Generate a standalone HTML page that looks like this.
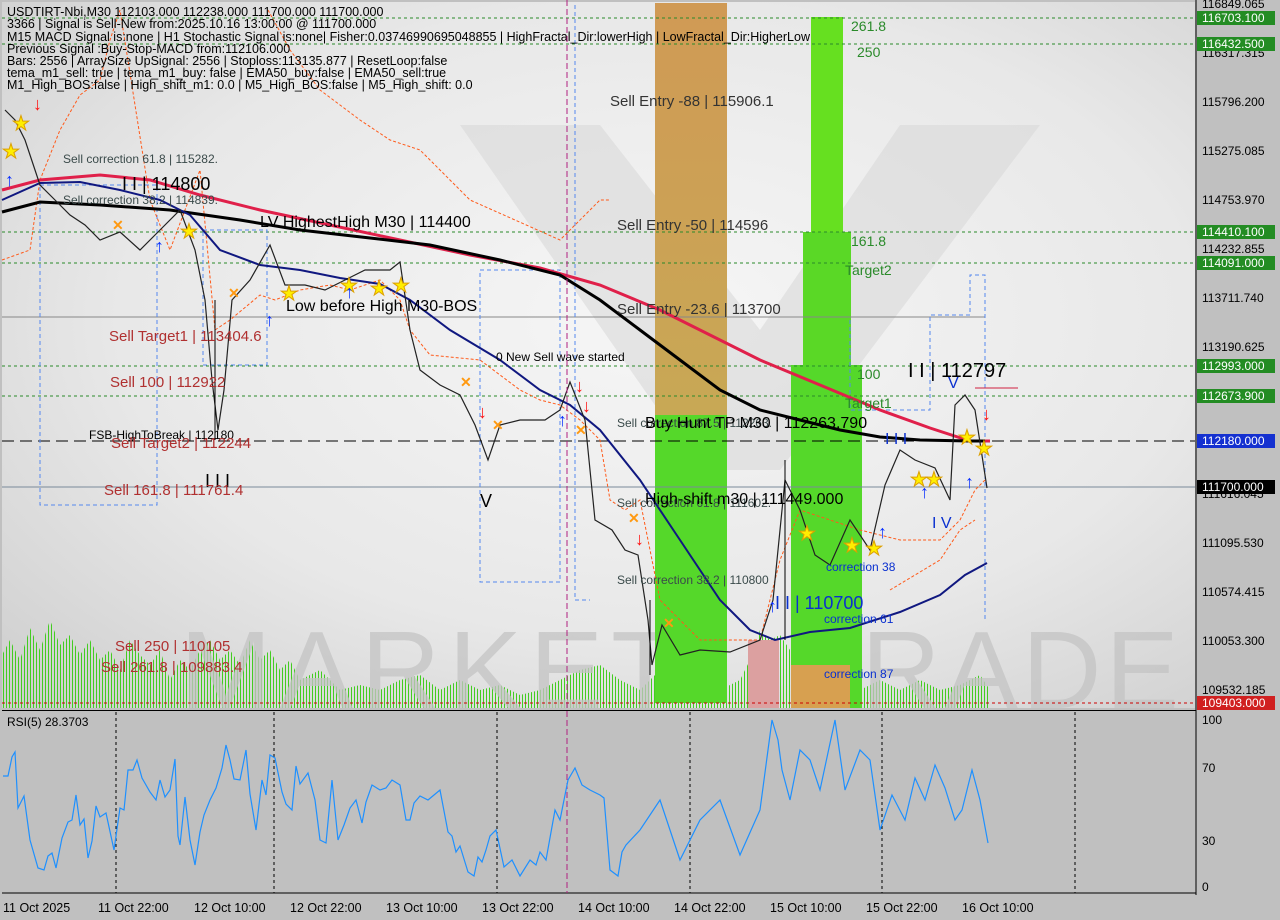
<!DOCTYPE html>
<html><head><meta charset="utf-8"><style>
html,body{margin:0;padding:0;width:1280px;height:920px;overflow:hidden;background:#c0c0c0;font-family:"Liberation Sans",sans-serif}
svg{display:block}
</style></head><body>
<svg width="1280" height="920" viewBox="0 0 1280 920" xmlns="http://www.w3.org/2000/svg" font-family="Liberation Sans, sans-serif">
<defs>
<radialGradient id="bg" cx="0.55" cy="0.45" r="0.75">
<stop offset="0" stop-color="#f6f6f6"/><stop offset="0.6" stop-color="#e8e8e8"/><stop offset="1" stop-color="#cfcfcf"/>
</radialGradient>
<linearGradient id="or" x1="0" y1="0" x2="0" y2="1"><stop offset="0" stop-color="#d09a55"/><stop offset="1" stop-color="#c8a855"/></linearGradient>
<pattern id="vol" width="3" height="10" patternUnits="userSpaceOnUse"><rect x="0" y="0" width="1" height="10" fill="#44cc22"/></pattern>
<clipPath id="vclip"><polygon points="2,708 2,655 10,640 20,660 30,628 40,650 50,620 60,645 70,635 80,655 90,640 100,660 110,650 120,670 130,640 140,655 150,665 160,650 170,680 180,660 190,670 200,650 210,640 220,660 230,650 240,665 250,640 260,660 270,650 280,670 290,660 300,680 320,670 340,690 360,685 380,690 400,680 420,675 440,690 460,680 480,690 500,685 520,695 540,690 560,680 580,670 600,665 620,680 640,690 660,670 680,690 700,695 720,690 740,680 750,660 760,630 770,640 780,635 790,650 800,660 820,670 840,680 860,690 880,680 900,690 920,680 940,690 960,685 980,675 990,690 990,708"/></clipPath>
</defs>
<rect width="1280" height="920" fill="#c0c0c0"/>
<rect x="2" y="2" width="1193" height="706" fill="url(#bg)"/>
<!-- watermark -->
<polygon points="460,125 600,125 760,330 900,125 1040,125 780,470 700,470" fill="#d8d8d8" opacity="0.6"/>
<!-- volume -->
<rect x="2" y="600" width="990" height="108" fill="url(#vol)" clip-path="url(#vclip)"/>
<text x="180" y="708" font-size="110" fill="#c4c4c4" opacity="0.75" letter-spacing="8">MARKET</text>
<text x="790" y="708" font-size="110" fill="#c4c4c4" opacity="0.75" letter-spacing="4">TRADE</text>
<!-- zones -->
<rect x="655" y="3" width="72" height="412" fill="url(#or)"/>
<rect x="655" y="415" width="72" height="288" fill="#55d82a"/>
<rect x="811" y="17" width="32" height="215" fill="#66e020"/>
<rect x="803" y="232" width="48" height="133" fill="#5ad826"/>
<rect x="791" y="365" width="71" height="343" fill="#55d82a"/>
<rect x="791" y="665" width="59" height="43" fill="#d7a050"/>
<rect x="748" y="640" width="31" height="68" fill="#dca0a0"/>
<g stroke="#2a8a2a" stroke-dasharray="3,3" stroke-width="1">
<line x1="2" y1="18" x2="1195" y2="18"/><line x1="2" y1="44" x2="1195" y2="44"/>
<line x1="2" y1="232" x2="1195" y2="232"/><line x1="2" y1="263" x2="1195" y2="263"/>
<line x1="2" y1="366" x2="1195" y2="366"/><line x1="2" y1="396" x2="1195" y2="396"/>
</g>
<line x1="2" y1="441" x2="1195" y2="441" stroke="#000" stroke-dasharray="12,6"/>
<line x1="2" y1="487" x2="1195" y2="487" stroke="#7a8a9a"/>
<line x1="2" y1="703" x2="1195" y2="703" stroke="#c00" stroke-dasharray="3,3"/>
<line x1="2" y1="317" x2="985" y2="317" stroke="#888"/>
<g fill="none" stroke="#5588ee" stroke-dasharray="4,3" stroke-width="1">
<rect x="40" y="185" width="117" height="320"/>
<rect x="203" y="230" width="64" height="135"/>
<rect x="480" y="270" width="80" height="312"/>
<polyline points="575,5 575,600 590,600"/>
<polyline points="850,320 850,410 930,410 930,315 970,315 970,275 985,275 985,620"/>
</g>
<polyline fill="none" stroke="#ff5a1a" stroke-dasharray="3,2" points="2,260 30,250 40,180 60,130 80,95 100,80 110,40 120,10 150,200 170,250 185,210 200,170 215,330 230,320 260,295 275,300 300,290 330,285 350,290 380,280 400,300 410,330 430,355 480,360 520,390 540,400 560,405 580,420 600,440 610,500 625,510 640,500 660,600 700,640 760,640 780,560 800,510 830,520 860,530 900,540 940,540 960,520 975,490 985,480"/>
<polyline fill="none" stroke="#ff5a1a" stroke-dasharray="3,2" points="268,10 290,50 320,90 360,120 390,140 420,150 470,200 560,240 600,200 610,200"/>
<polyline fill="none" stroke="#ff5a1a" stroke-dasharray="3,2" points="890,590 940,560 960,530 975,520"/>
<polyline fill="none" stroke="#e0204a" stroke-width="3" points="2,190 40,180 100,175 150,180 200,195 260,210 330,225 400,240 470,255 540,268 600,285 660,310 700,330 760,360 820,385 880,410 930,428 970,441 990,441"/>
<polyline fill="none" stroke="#000" stroke-width="3" points="2,212 40,202 100,205 170,210 240,220 300,230 370,238 430,245 500,260 560,275 600,300 640,330 680,360 720,390 760,410 800,420 840,430 880,437 920,440 970,441 985,441"/>
<polyline fill="none" stroke="#101880" stroke-width="2" points="2,200 40,183 80,182 120,190 160,200 190,215 220,250 260,265 300,270 340,278 380,284 410,300 450,330 500,360 540,390 570,405 600,430 640,480 680,540 720,600 750,630 775,640 810,632 850,628 900,612 940,595 965,575 987,563"/>
<polyline fill="none" stroke="#222" stroke-width="1.2" points="5,110 15,120 25,140 35,170 40,185 55,200 70,215 85,225 100,240 120,232 140,250 160,230 180,210 195,250 205,300 212,380 218,430 224,390 232,300 250,280 270,245 285,285 305,285 325,290 345,280 365,270 390,270 400,262 410,330 420,370 440,385 460,395 475,425 488,460 500,425 520,420 545,420 560,410 570,382 585,420 595,520 612,530 625,550 638,555 648,620 652,665 662,625 680,655 700,650 730,652 760,640 773,600 785,480 800,510 815,555 830,565 850,520 870,550 885,485 900,450 915,460 935,468 950,500 955,405 965,395 975,410 987,488"/>
<g stroke="#000" stroke-width="1">
<line x1="215" y1="300" x2="215" y2="440"/><line x1="650" y1="600" x2="650" y2="675"/><line x1="785" y1="460" x2="785" y2="640"/>
</g>
<g fill="#ffee00" stroke="#dda000" font-size="20">
<text x="180" y="238">★</text><text x="280" y="300">★</text><text x="370" y="295">★</text><text x="392" y="292">★</text><text x="340" y="292">★</text>
<text x="798" y="540">★</text><text x="843" y="552">★</text><text x="865" y="555">★</text><text x="910" y="486">★</text><text x="925" y="486">★</text><text x="958" y="444">★</text><text x="975" y="455">★</text><text x="2" y="158">★</text><text x="12" y="130">★</text>
</g>
<g fill="#ff9910" font-size="14" font-weight="bold"><text x="112" y="230">✕</text><text x="228" y="298">✕</text><text x="460" y="387">✕</text><text x="492" y="430">✕</text><text x="575" y="435">✕</text><text x="628" y="523">✕</text><text x="663" y="628">✕</text></g>
<g fill="#0a30ff" font-size="18" font-weight="bold"><text x="5" y="186">↑</text><text x="265" y="326">↑</text><text x="155" y="252">↑</text><text x="558" y="426">↑</text><text x="768" y="612">↑</text><text x="878" y="538">↑</text><text x="920" y="498">↑</text><text x="965" y="488">↑</text><text x="345" y="298">↑</text></g>
<g fill="#ff1010" font-size="18" font-weight="bold"><text x="33" y="110">↓</text><text x="478" y="418">↓</text><text x="582" y="412">↓</text><text x="635" y="545">↓</text><text x="982" y="420">↓</text><text x="575" y="392">↓</text></g>
<polyline fill="none" stroke="#d02040" points="975,388 1018,388"/>
<g font-size="12.5" fill="#000">
<text x="7" y="16">USDTIRT-Nbi,M30  112103.000 112238.000 111700.000 111700.000</text>
<text x="7" y="28">3366 | Signal is Sell-New from:2025.10.16 13:00:00 @ 111700.000</text>
<text x="7" y="41">M15 MACD Signal is:none | H1 Stochastic Signal is:none| Fisher:0.03746990695048855 | HighFractal_Dir:lowerHigh | LowFractal_Dir:HigherLow</text>
<text x="7" y="53">Previous Signal :Buy-Stop-MACD from:112106.000</text>
<text x="7" y="65">Bars: 2556 | ArraySize UpSignal: 2556 | Stoploss:113135.877 | ResetLoop:false</text>
<text x="7" y="77">tema_m1_sell: true | tema_m1_buy: false | EMA50_buy:false | EMA50_sell:true</text>
<text x="7" y="89">M1_High_BOS:false | High_shift_m1: 0.0 | M5_High_BOS:false | M5_High_shift: 0.0</text>
</g>
<g font-size="12" fill="#3a4a4a">
<text x="63" y="163">Sell correction 61.8 | 115282.</text>
<text x="63" y="204">Sell correction 38.2 | 114839.</text>
<text x="617" y="427">Sell correction 87.5 | 112263.</text>
<text x="617" y="507">Sell correction 61.8 | 111602.</text>
<text x="617" y="584">Sell correction 38.2 | 110800</text>
</g>
<g font-size="15" fill="#000">
<text x="122" y="190" font-size="18">I I | 114800</text>
<text x="260" y="227" font-size="16">LV  HighestHigh   M30 | 114400</text>
<text x="286" y="311" font-size="16">Low before High   M30-BOS</text>
<text x="610" y="106" fill="#333">Sell Entry -88 | 115906.1</text>
<text x="617" y="230" fill="#333">Sell Entry -50 | 114596</text>
<text x="617" y="314" fill="#333">Sell Entry -23.6 | 113700</text>
<text x="496" y="361" font-size="12">0 New Sell wave started</text>
<text x="645" y="428" font-size="16">Buy Hunt TP M30 | 112263.790</text>
<text x="645" y="504" font-size="16">High-shift m30 | 111449.000</text>
<text x="89" y="439" font-size="12">FSB-HighToBreak | 112180</text>
<text x="908" y="377" font-size="20">I I | 112797</text>
<text x="480" y="507" font-size="18">V</text>
<text x="205" y="487" font-size="18">I I I</text>
</g>
<g font-size="15" fill="#b03030">
<text x="109" y="341">Sell Target1 | 113404.6</text>
<text x="110" y="387">Sell 100 | 112922</text>
<text x="111" y="448">Sell Target2 | 112244</text>
<text x="104" y="495">Sell 161.8 | 111761.4</text>
<text x="115" y="651">Sell  250 | 110105</text>
<text x="101" y="672">Sell  261.8 | 109883.4</text>
</g>
<g font-size="14" fill="#2a8a2a">
<text x="851" y="31">261.8</text><text x="857" y="57">250</text><text x="851" y="246">161.8</text><text x="845" y="275">Target2</text><text x="857" y="379">100</text><text x="845" y="408">Target1</text>
</g>
<g font-size="12" fill="#0a30d0">
<text x="826" y="571">correction 38</text><text x="824" y="623">correction 61</text><text x="824" y="678">correction 87</text>
<text x="775" y="609" font-size="18">I I | 110700</text>
<text x="885" y="444" font-size="16">I I I</text>
<text x="932" y="528" font-size="16">I V</text>
<text x="948" y="388" font-size="16">V</text>
</g>
<line x1="1196" y1="0" x2="1196" y2="895" stroke="#000"/>
<g font-size="12" fill="#000">
<text x="1202" y="8">116849.065</text><text x="1202" y="57">116317.315</text><text x="1202" y="106">115796.200</text><text x="1202" y="155">115275.085</text><text x="1202" y="204">114753.970</text><text x="1202" y="253">114232.855</text><text x="1202" y="302">113711.740</text><text x="1202" y="351">113190.625</text><text x="1202" y="498">111616.045</text><text x="1202" y="547">111095.530</text><text x="1202" y="596">110574.415</text><text x="1202" y="645">110053.300</text><text x="1202" y="694">109532.185</text>
</g>
<g font-size="12" fill="#fff">
<rect x="1197" y="11" width="78" height="14" fill="#238c23"/><text x="1202" y="22">116703.100</text>
<rect x="1197" y="37" width="78" height="14" fill="#238c23"/><text x="1202" y="48">116432.500</text>
<rect x="1197" y="225" width="78" height="14" fill="#238c23"/><text x="1202" y="236">114410.100</text>
<rect x="1197" y="256" width="78" height="14" fill="#238c23"/><text x="1202" y="267">114091.000</text>
<rect x="1197" y="359" width="78" height="14" fill="#238c23"/><text x="1202" y="370">112993.000</text>
<rect x="1197" y="389" width="78" height="14" fill="#238c23"/><text x="1202" y="400">112673.900</text>
<rect x="1197" y="434" width="78" height="14" fill="#1430d0"/><text x="1202" y="445">112180.000</text>
<rect x="1197" y="480" width="78" height="14" fill="#000"/><text x="1202" y="491">111700.000</text>
<rect x="1197" y="696" width="78" height="14" fill="#d02020"/><text x="1202" y="707">109403.000</text>
</g>
<rect x="2" y="710" width="1194" height="1" fill="#000"/>
<rect x="2" y="712" width="1193" height="181" fill="#c0c0c0"/>
<line x1="2" y1="893" x2="1196" y2="893" stroke="#000"/>
<g stroke="#000" stroke-dasharray="3,3"><line x1="116" y1="712" x2="116" y2="893"/><line x1="274" y1="712" x2="274" y2="893"/><line x1="497" y1="712" x2="497" y2="893"/><line x1="690" y1="712" x2="690" y2="893"/><line x1="882" y1="712" x2="882" y2="893"/><line x1="1075" y1="712" x2="1075" y2="893"/></g>
<line x1="567" y1="0" x2="567" y2="893" stroke="#b02080" stroke-dasharray="6,3"/>
<text x="7" y="726" font-size="12" fill="#000">RSI(5) 28.3703</text>
<polyline fill="none" stroke="#1e90ff" stroke-width="1.2" points="3,776 8,776 12,757 15,752 18,808 24,796 30,840 38,868 44,870 48,856 52,853 56,868 62,838 68,822 72,820 76,795 80,825 84,819 88,858 92,841 96,806 100,817 106,813 114,850 120,808 124,810 128,770 133,770 137,760 142,778 150,792 156,800 160,780 165,797 170,790 175,759 178,836 180,845 185,797 190,840 195,865 200,832 204,815 210,800 216,788 222,768 226,745 230,760 234,779 240,780 246,750 250,794 256,830 262,780 266,795 270,755 275,758 282,792 286,804 292,810 296,766 300,784 308,773 315,800 320,840 326,843 332,780 338,840 344,825 350,808 356,800 362,823 366,802 372,785 380,790 386,788 392,780 400,785 406,820 410,820 414,803 420,796 428,800 440,790 448,832 452,836 456,852 460,846 468,872 474,876 478,857 482,862 486,850 490,836 496,830 504,867 512,860 520,876 530,860 536,865 540,852 546,860 555,810 560,820 568,780 575,768 582,785 590,790 600,795 604,798 610,870 618,876 622,852 626,845 640,830 660,800 680,860 700,820 720,800 740,855 760,810 772,720 778,740 782,770 790,800 800,750 810,760 820,790 835,720 845,790 860,750 870,760 880,830 892,795 905,820 915,778 925,800 935,765 945,788 955,820 962,810 972,770 980,800 988,843"/>
<g font-size="12" fill="#000"><text x="1202" y="724">100</text><text x="1202" y="772">70</text><text x="1202" y="845">30</text><text x="1202" y="891">0</text></g>
<g font-size="12.5" fill="#000">
<text x="3" y="912">11 Oct 2025</text><text x="98" y="912">11 Oct 22:00</text><text x="194" y="912">12 Oct 10:00</text><text x="290" y="912">12 Oct 22:00</text><text x="386" y="912">13 Oct 10:00</text><text x="482" y="912">13 Oct 22:00</text><text x="578" y="912">14 Oct 10:00</text><text x="674" y="912">14 Oct 22:00</text><text x="770" y="912">15 Oct 10:00</text><text x="866" y="912">15 Oct 22:00</text><text x="962" y="912">16 Oct 10:00</text>
</g>
</svg>
</body></html>
